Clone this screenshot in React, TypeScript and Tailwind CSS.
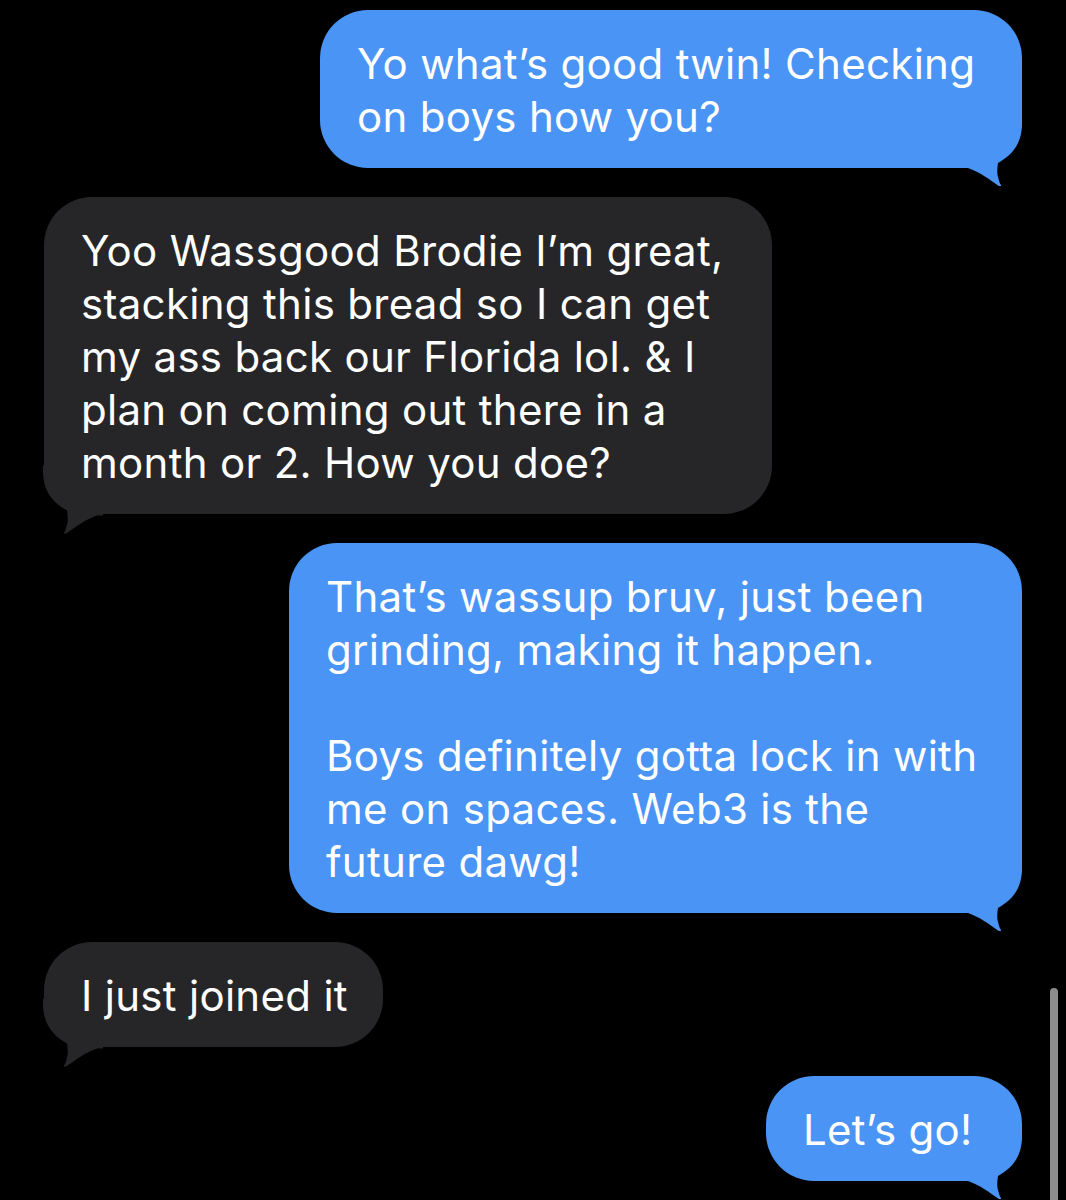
import React from 'react';

type Msg = { from: 'me' | 'them'; width: string; lines: string[] };

const messages: Msg[] = [
  { from: 'me', width: 'w-[702px]', lines: ['Yo what’s good twin! Checking', 'on boys how you?'] },
  {
    from: 'them',
    width: 'w-[728px]',
    lines: [
      'Yoo Wassgood Brodie I’m great,',
      'stacking this bread so I can get',
      'my ass back our Florida lol. & I',
      'plan on coming out there in a',
      'month or 2. How you doe?',
    ],
  },
  {
    from: 'me',
    width: 'w-[733px]',
    lines: [
      'That’s wassup bruv, just been',
      'grinding, making it happen.',
      '',
      'Boys definitely gotta lock in with',
      'me on spaces. Web3 is the',
      'future dawg!',
    ],
  },
  { from: 'them', width: 'w-[339px]', lines: ['I just joined it'] },
  { from: 'me', width: 'w-[256px]', lines: ['Let’s go!'] },
];

const Tail = ({ side }: { side: 'me' | 'them' }) => (
  <svg
    viewBox="0 0 60 68"
    className={
      side === 'me'
        ? 'absolute right-0 bottom-[-18px] w-[60px] h-[68px] fill-[#4a94f5]'
        : 'absolute left-[-1px] bottom-[-21px] w-[60px] h-[71px] fill-[#262628] -scale-x-100'
    }
  >
    <path d="M0 0 H60 V5 C60 28 48 38 36 45 C35 50 35 56 36 59 C37 63 38 66 39 67 C39.5 68.5 37.5 68.5 36 67.5 C28 62 18 54 6 50 H0 Z" />
  </svg>
);

const Bubble = ({ msg }: { msg: Msg }) => {
  const mine = msg.from === 'me';
  return (
    <div
      className={`relative ${msg.width} rounded-[48px] pl-[37px] pt-[27px] pb-[25px] ${
        mine ? 'self-end bg-[#4a94f5]' : 'self-start bg-[#262628]'
      }`}
    >
      <Tail side={msg.from} />
      <div className="relative">
        {msg.lines.map((l, i) => (
          <div key={i} className="h-[53px] leading-[53px] whitespace-pre">
            {l}
          </div>
        ))}
      </div>
    </div>
  );
};

export default function App() {
  return (
    <div className="relative h-[1200px] w-[1066px] overflow-hidden bg-black text-white font-['Inter',sans-serif] text-[42px] tracking-[0.3px]">
      <div className="flex flex-col gap-[29px] px-[44px] pt-[10px]">
        {messages.map((m, i) => (
          <Bubble key={i} msg={m} />
        ))}
      </div>
      {/* scroll indicator */}
      <div className="absolute right-[8px] top-[988px] h-[230px] w-[8px] rounded-full bg-[#8c8c8c]" />
    </div>
  );
}
